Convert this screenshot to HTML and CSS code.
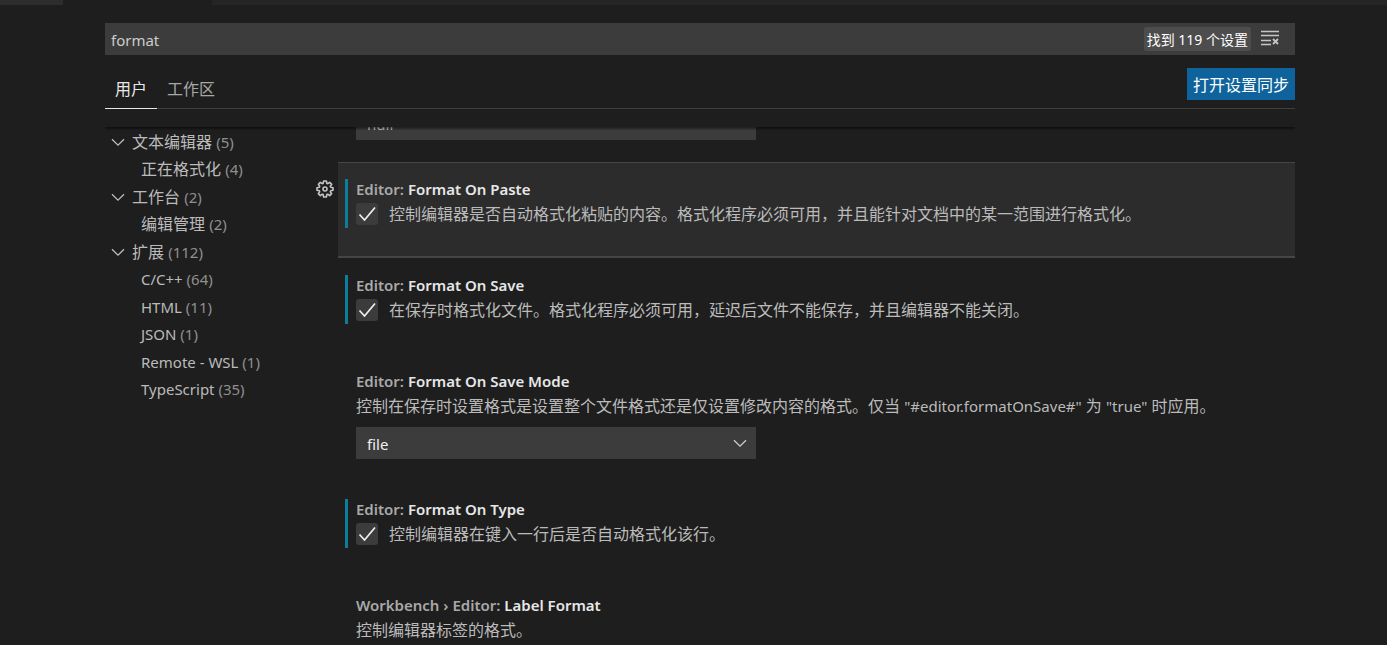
FILE: index.html
```html
<!DOCTYPE html>
<html lang="zh-CN">
<head>
<meta charset="utf-8">
<meta name="viewport" content="width=device-width, initial-scale=1">
<title>设置</title>
<link rel="stylesheet" href="styles.css">
</head>
<body>
<svg class="sprite" aria-hidden="true">
  <symbol id="chevron" viewBox="0 0 16 16"><path d="M2 5.200 8 11.200l6-6" fill="none" stroke="currentColor" stroke-width="1.300"/></symbol>
</svg>
<div class="tab-strip"><span class="strip-tab"></span><span class="strip-tab strip-tab-active"></span><span class="strip-rest"></span></div>
<main class="settings">
  <header class="settings-header">
    <div class="search">
      <input class="search-input" type="text" value="format" aria-label="搜索设置">
      <span class="search-count">找到 119 个设置</span>
      <button class="search-clear" type="button" aria-label="清除设置搜索结果">
        <svg viewBox="0 0 20 20" width="20" height="20" fill="none" stroke="currentColor" stroke-width="1.400"><path d="M1 2.500h18M1 6.500h18M1 11.500h10M1 15.500h10"/><path d="m13 10 5 5m0-5-5 5" stroke-width="1.800"/></svg>
      </button>
    </div>
    <div class="scope-bar">
      <nav class="scopes">
        <button class="scope scope-active" type="button">用户</button>
        <button class="scope" type="button">工作区</button>
      </nav>
      <button class="sync" type="button">打开设置同步</button>
    </div>
  </header>
  <div class="settings-body">
    <ul class="toc">
      <li class="toc-row"><svg class="toc-arrow"><use href="#chevron"/></svg><span>文本编辑器 <span class="count">(5)</span></span></li>
      <li class="toc-row toc-child"><span>正在格式化 <span class="count">(4)</span></span></li>
      <li class="toc-row"><svg class="toc-arrow"><use href="#chevron"/></svg><span>工作台 <span class="count">(2)</span></span></li>
      <li class="toc-row toc-child"><span>编辑管理 <span class="count">(2)</span></span></li>
      <li class="toc-row"><svg class="toc-arrow"><use href="#chevron"/></svg><span>扩展 <span class="count">(112)</span></span></li>
      <li class="toc-row toc-child toc-latin"><span>C/C++ <span class="count">(64)</span></span></li>
      <li class="toc-row toc-child toc-latin"><span>HTML <span class="count">(11)</span></span></li>
      <li class="toc-row toc-child toc-latin"><span>JSON <span class="count">(1)</span></span></li>
      <li class="toc-row toc-child toc-latin"><span>Remote - WSL <span class="count">(1)</span></span></li>
      <li class="toc-row toc-child toc-latin"><span>TypeScript <span class="count">(35)</span></span></li>
    </ul>
    <div class="list">
      <div class="previous"><input class="field field-text" type="text" value="null" aria-label="Default Formatter"></div>

      <section class="item item-focused">
        <button class="gear" type="button" aria-label="更多操作">
          <svg viewBox="0 0 18 18" width="18" height="18" fill="none" stroke="currentColor" stroke-width="1.600" stroke-linejoin="round"><path d="M7.600 1h2.800l.4 2.300 1 .4 1.900-1.300 2 2-1.400 1.900.4 1 2.300.4v2.600l-2.300.4-.4 1 1.300 1.900-1.900 2-1.900-1.400-1 .4-.4 2.400H7.600l-.4-2.400-1-.4-1.900 1.400-2-2 1.400-1.900-.4-1L1 10.300V7.700l2.300-.4.4-1-1.300-1.900 1.900-2 1.900 1.300 1-.4z"/><circle cx="9" cy="9" r="2"/></svg>
        </button>
        <div class="content modified">
          <h2 class="title"><span class="category">Editor:</span> Format On Paste</h2>
          <label class="check-row"><input class="check" type="checkbox" checked><span>控制编辑器是否自动格式化粘贴的内容。格式化程序必须可用，并且能针对文档中的某一范围进行格式化。</span></label>
        </div>
      </section>

      <section class="item">
        <div class="content modified">
          <h2 class="title"><span class="category">Editor:</span> Format On Save</h2>
          <label class="check-row"><input class="check" type="checkbox" checked><span>在保存时格式化文件。格式化程序必须可用，延迟后文件不能保存，并且编辑器不能关闭。</span></label>
        </div>
      </section>

      <section class="item item-select">
        <div class="content">
          <h2 class="title"><span class="category">Editor:</span> Format On Save Mode</h2>
          <label class="description" for="save-mode">控制在保存时设置格式是设置整个文件格式还是仅设置修改内容的格式。仅当 <span class="latin">"#editor.formatOnSave#"</span> 为 <span class="latin">"true"</span> 时应用。</label>
          <div class="select-wrap">
            <select class="field" id="save-mode"><option>file</option><option>modifications</option></select>
            <svg class="select-arrow"><use href="#chevron"/></svg>
          </div>
        </div>
      </section>

      <section class="item">
        <div class="content modified">
          <h2 class="title"><span class="category">Editor:</span> Format On Type</h2>
          <label class="check-row"><input class="check" type="checkbox" checked><span>控制编辑器在键入一行后是否自动格式化该行。</span></label>
        </div>
      </section>

      <section class="item">
        <div class="content">
          <h2 class="title"><span class="category">Workbench › Editor:</span> Label Format</h2>
          <p class="description">控制编辑器标签的格式。</p>
        </div>
      </section>
    </div>
  </div>
</main>
</body>
</html>
```
FILE: styles.css
```css
* { box-sizing: border-box; }

body {
  margin: 0;
  height: 100vh;
  display: flex;
  flex-direction: column;
  overflow: hidden;
  background: #1e1e1e;
  color: #bbbbbb;
  font: 16px/24px "Noto Sans", "Noto Sans CJK SC", sans-serif;
}

button, input, select { font: inherit; color: inherit; margin: 0; }
button { border: 0; padding: 0; background: none; cursor: pointer; }
h2, p, ul { margin: 0; padding: 0; }

.sprite { display: none; }

.tab-strip { flex: none; display: flex; height: 5px; }
.strip-tab { width: 63px; background: #2d2d2d; }
.strip-tab-active { width: 149px; background: #1e1e1e; }
.strip-rest { flex: 1; background: #252526; }

.settings {
  flex: 1;
  min-height: 0;
  display: flex;
  flex-direction: column;
  padding: 18px 92px 0 105px;
}

.settings-header { flex: none; }

.search {
  display: flex;
  align-items: center;
  height: 32px;
  padding-right: 15px;
  background: #3c3c3c;
  color: #cccccc;
}
.search-input {
  flex: 1;
  min-width: 0;
  padding: 2px 6px 0;
  border: 0;
  outline: 0;
  background: none;
  font-size: 15px;
}
.search-count {
  padding: 1px 3px 0;
  border-radius: 2px;
  background: #4d4d4d;
  color: #ffffff;
  font-size: 14px;
  line-height: 23px;
}
.search-clear { display: flex; margin-left: 9px; color: #c5c5c5; }

.scope-bar {
  display: flex;
  justify-content: space-between;
  height: 41px;
  margin-top: 13px;
  border-bottom: 1px solid #404040;
}
.scopes { display: flex; height: 41px; }
.scope { padding: 1px 10px 0; border-bottom: 1px solid transparent; color: #a8a8a8; }
.scope-active { border-color: #e7e7e7; color: #e7e7e7; }
.sync { height: 32px; padding: 2px 6px 0; background: #0e639c; color: #ffffff; }

.settings-body {
  position: relative;
  flex: 1;
  min-height: 0;
  display: flex;
  margin-top: 18px;
  overflow: hidden;
}
.settings-body::before {
  content: "";
  position: absolute;
  z-index: 1;
  inset: 0 0 auto;
  height: 3px;
  background: linear-gradient(rgba(0, 0, 0, .5), rgba(0, 0, 0, .1));
}

.toc {
  flex: none;
  display: grid;
  grid-template-rows: repeat(10, 1fr);
  width: 207px;
  height: 275px;
  margin-top: 1px;
  list-style: none;
}
.toc-row { display: flex; align-items: center; padding-left: 5px; white-space: nowrap; }
.toc-child { padding-left: 36px; }
.toc-latin { font-size: 15px; }
.toc-arrow { width: 16px; height: 16px; margin-right: 6px; }
.count { color: #8f8f8f; font-size: 15px; }

.list { flex: 1; min-width: 0; margin-top: -19px; }
.previous { padding: 0 0 22px 44px; }

.item { position: relative; margin-left: 26px; padding: 17px 0 30px 7px; }
.item-focused {
  padding: 16px 0 28px 7px;
  border: solid #454545;
  border-width: 1px 0 2px;
  background: #2c2c2c;
}
.item-select { padding-bottom: 23px; }
.gear { position: absolute; top: 17px; left: -22px; display: flex; color: #c5c5c5; }

.content { min-height: 49px; padding-left: 11px; }
.modified { padding-left: 8px; border-left: 3px solid #0c7d9d; }

.title { color: #e7e7e7; font-size: 15px; font-weight: 600; line-height: 20px; }
.category { color: #a9a9a9; }

.check-row { display: flex; align-items: center; margin-top: 3px; gap: 11px; }
.check {
  appearance: none;
  flex: none;
  width: 22px;
  height: 22px;
  border-radius: 3px;
  background: #3c3c3c url("data:image/svg+xml,%3Csvg xmlns='http://www.w3.org/2000/svg' viewBox='0 0 22 22'%3E%3Cpath d='M3.500 11.500 8.500 17 19 4.500' fill='none' stroke='%23f0f0f0' stroke-width='1.700'/%3E%3C/svg%3E") center / 22px;
}
.description { display: block; margin-top: 3px; }
.latin { font-size: 15px; }

.field {
  display: block;
  width: 400px;
  max-width: 100%;
  height: 32px;
  padding: 2px 11px 0;
  border: 0;
  border-radius: 0;
  outline: 0;
  background: #3c3c3c;
  color: #f0f0f0;
  font-size: 15px;
  appearance: none;
}
.field-text { padding-top: 0; color: #cccccc; }
.select-wrap { position: relative; width: 400px; max-width: 100%; margin-top: 9px; }
.select-arrow { position: absolute; top: 8px; right: 8px; width: 16px; height: 16px; color: #cccccc; pointer-events: none; }
```
